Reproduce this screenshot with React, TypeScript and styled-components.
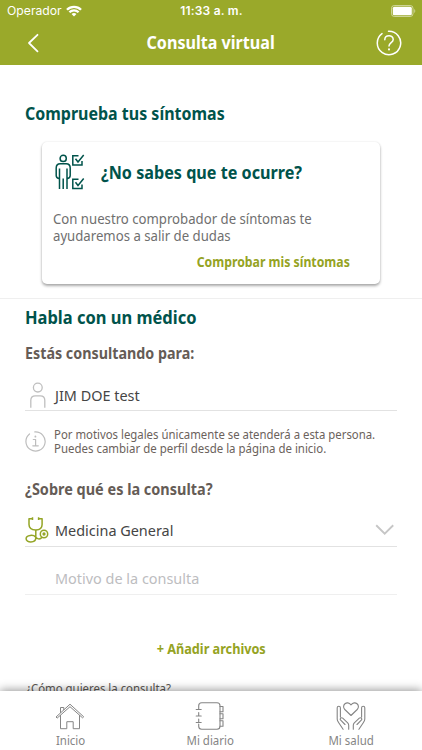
import React from "react";
import styled, { createGlobalStyle } from "styled-components";

const GlobalStyle = createGlobalStyle`
  * { box-sizing: border-box; }
  body { margin: 0; background: #fff; overflow: hidden; }
`;

const Screen = styled.div`
  display: flex;
  flex-direction: column;
  width: 422px;
  height: 750px;
  overflow: hidden;
  background: #fff;
  color: #6b625c;
  font-family: "Noto Sans", "Open Sans", sans-serif;
`;

const Narrow = styled.span<{ $x: number; $origin?: string }>`
  display: inline-block;
  white-space: nowrap;
  transform: scaleX(${(p) => p.$x});
  transform-origin: ${(p) => p.$origin || "left"} center;
`;

const Header = styled.header`
  flex: none;
  height: 65px;
  background: #9aa92a;
  color: #fff;
`;

const StatusBar = styled.div`
  display: grid;
  grid-template-columns: 1fr auto 1fr;
  align-items: center;
  height: 22px;
  padding: 0 6px 0 7px;
  font: 400 12.2px/22px Inter, sans-serif;
`;

const Carrier = styled.div`
  display: flex;
  align-items: center;
  gap: 4px;
`;

const Clock = styled.div`
  font-weight: 600;
  font-size: 12px;
  letter-spacing: 0.2px;
`;

const BatterySlot = styled.div`
  display: flex;
  justify-content: flex-end;
  margin-top: -1px;
`;

const NavBar = styled.div`
  display: grid;
  grid-template-columns: 66px 1fr 66px;
  align-items: center;
  justify-items: center;
  height: 41px;
`;

const NavTitle = styled.h1`
  margin: -1px 0 0;
  font-size: 18px;
  line-height: 24px;
  font-weight: 700;
`;

const Content = styled.main`
  flex: none;
  height: 626px;
  overflow: hidden;
`;

const SymptomSection = styled.section`
  height: 234px;
  padding: 36px 42px 0;
  border-bottom: 1px solid #efefef;
`;

const Heading = styled.h2<{ $outdent?: boolean }>`
  margin: 0 0 0 ${(p) => (p.$outdent ? "-17px" : "0")};
  color: #00534b;
  font-size: 18px;
  line-height: 24px;
  font-weight: 700;
`;

const Card = styled.article`
  display: flex;
  flex-direction: column;
  width: 338px;
  height: 142px;
  margin-top: 17px;
  padding: 10px 30px 0 11px;
  border-radius: 5px;
  background: #fff;
  box-shadow: 0 2px 3px rgba(0, 0, 0, 0.33), 0 0 2px rgba(0, 0, 0, 0.1);
`;

const CardHeader = styled.div`
  display: flex;
  align-items: center;
  height: 40px;
  gap: 16px;
  svg { margin-left: 2px; }
`;

const CardText = styled.p`
  margin: 19px 0 0;
  color: #6f6f6f;
  font-size: 13.8px;
  line-height: 16.5px;
`;

const TextLine = styled.span`
  display: block;
`;

const LinkButton = styled.button<{ $align: "right" | "center" }>`
  display: block;
  width: 100%;
  padding: 0;
  border: 0;
  background: none;
  color: #95a323;
  font: 700 14px/20px "Noto Sans", sans-serif;
  text-align: ${(p) => p.$align};
`;

const CardAction = styled.div`
  margin-top: 8px;
`;

const DoctorSection = styled.section`
  padding: 5.5px 25px 0;
`;

const Question = styled.h3<{ $top: number }>`
  margin: ${(p) => p.$top}px 0 0;
  color: #655c56;
  font-size: 15.8px;
  line-height: 22px;
  font-weight: 700;
`;

const Field = styled.div<{ $top: number; $faint?: boolean }>`
  display: grid;
  grid-template-columns: 29.5px 1fr 22px;
  align-items: center;
  height: 30px;
  margin-top: ${(p) => p.$top}px;
  padding-bottom: 3px;
  border-bottom: 1px solid ${(p) => (p.$faint ? "#efefef" : "#e2e2e2")};
  color: ${(p) => (p.$faint ? "#bdbdbf" : "#454545")};
  font-size: 15.2px;
  line-height: 22px;
`;

const Notice = styled.div`
  display: grid;
  grid-template-columns: 28.5px 1fr;
  align-items: center;
  height: 28px;
  margin-top: 16.5px;
  color: #6b625c;
  font-size: 12px;
  line-height: 14px;
`;

const Attach = styled.div`
  margin-top: 44px;
`;

const NextQuestion = styled.p`
  margin: 21px 0 0 1px;
  color: #5b5754;
  font-size: 12px;
  line-height: 18px;
`;

const TabBar = styled.nav`
  position: relative;
  flex: none;
  display: grid;
  grid-template-columns: repeat(3, 1fr);
  height: 59px;
  padding-right: 1px;
  background: #fff;
  box-shadow: 0 -1px 9px rgba(0, 0, 0, 0.42);
`;

const Tab = styled.a`
  display: flex;
  flex-direction: column;
  align-items: center;
  padding-top: 11px;
  color: #858585;
  font-size: 12.2px;
  line-height: 16px;
  svg { margin-bottom: 3px; }
`;

const stroke = { fill: "none", stroke: "currentColor", strokeLinecap: "round", strokeLinejoin: "round" } as const;

const Wifi = () => (
  <svg width="16" height="12" viewBox="0 0 15 11" fill="none" stroke="#fff" strokeWidth="2.2">
    <path d="M.9 4.3A9.4 9.4 0 0 1 14.1 4.3M3.2 6.7A6.1 6.1 0 0 1 11.8 6.7" />
    <path d="M7.5 10.7 5.2 8.4a3.3 3.3 0 0 1 4.6 0Z" fill="#fff" stroke="none" />
  </svg>
);

const Battery = () => (
  <svg width="25" height="12" viewBox="0 0 25 12">
    <rect x=".5" y=".5" width="21.500" height="11" rx="2.8" fill="none" stroke="#fff" strokeOpacity=".5" />
    <rect x="1.800" y="1.800" width="19" height="8.400" rx="1.5" fill="#fff" />
    <path d="M23.300 4v4c1.300-.6 1.300-3.400 0-4Z" fill="#fff" fillOpacity=".55" />
  </svg>
);

const Back = () => (
  <svg width="12" height="20" viewBox="0 0 12 20" {...stroke} strokeWidth="1.8">
    <path d="M10.500 1.800 2 10l8.500 8.300" />
  </svg>
);

const Help = () => (
  <svg width="26" height="26" viewBox="0 0 26 26" {...stroke} strokeWidth="1.5">
    <path d="M12.500 1.300A11.700 11.700 0 1 1 6 3.600" />
    <path d="M8.800 9.700c0-5.200 8.400-5.200 8.400-.3 0 3.100-4.200 3.200-4.200 6.500" />
    <path d="M13 19.300v.2" strokeWidth="2" />
  </svg>
);

const BodyCheck = () => (
  <svg width="30" height="36" viewBox="0 0 30 36" {...stroke} strokeLinecap="butt" strokeLinejoin="miter" strokeWidth="1.500" color="#00534b">
    <circle cx="8.200" cy="4.400" r="3.100" />
    <path d="M3.800 24.500C1.800 24 1.200 23 1.200 21.500V14c0-3 1.500-4.300 4-4.300h6c2.500 0 4 1.300 4 4.300v7.500c0 1.500-.6 2.500-2.600 3M4.500 14.500V35M12 14.500V35M8.200 24.500V35" />
    <path d="M23.500 1.700h-5.700V11H27V7M20.500 4.700l2.500 3.300L28.700 1M23.500 25.200h-5.700v9.300H27v-4M20.500 28.200l2.500 3.300 5.700-7" />
  </svg>
);

const Person = () => (
  <svg width="26" height="28" viewBox="0 0 26 28" {...stroke} strokeLinecap="butt" strokeWidth="1.300" color="#bfbfbf">
    <circle cx="12.800" cy="6.600" r="4.400" />
    <path d="M5.800 26.800v-7.500q0-4.500 4.500-4.500h5q4.500 0 4.500 4.500v7.500" />
  </svg>
);

const Info = () => (
  <svg width="21" height="21" viewBox="0 0 21 21" {...stroke} strokeWidth="1.200" color="#bdbdbd">
    <path d="M9.800.9A9.600 9.600 0 1 1 4.500 3" />
    <path d="M8.300 8.500h2.300v6.300M7.800 14.800h5.500" />
    <path d="M10.400 5.500v.2" strokeWidth="1.800" />
  </svg>
);

const Stethoscope = () => (
  <svg width="24" height="26" viewBox="0 0 24 26" {...stroke} strokeLinecap="butt" strokeWidth="1.500" color="#94a526">
    <path d="M7.300 1.700H4V7.500c0 3.300 2.800 5.300 6.800 5.600 4-.3 6.300-2.300 6.300-5.600V1.700h-3.300" />
    <path d="M7.500.3v2.800M13.600.3v2.800M10.800 13v8c0 5.300-10 5-9.700.5.300-3.800 7.600-3.800 9.200-1.800 1.500 2 4.500 3.600 6.700.6" />
    <circle cx="19" cy="17" r="3.700" />
    <circle cx="19" cy="17" r=".9" />
  </svg>
);

const ChevronDown = () => (
  <svg width="20" height="12" viewBox="0 0 20 12" fill="none" stroke="#c6c6c6" strokeWidth="1.900">
    <path d="M1.200 1.200 9.700 9.600l8.500-8.400" />
  </svg>
);

const House = () => (
  <svg width="30" height="28" viewBox="0 0 30 28" {...stroke} strokeWidth="1">
    <path d="M1.300 14.800 15 2.200l13.700 12.600-1.200 1L15 4.700 2.500 15.800Z" />
    <path d="M5.500 10.500V5.500h3.300v2.200M5.500 13.500v13.200h6.300v-7h6.400v7h6.300V13.500" />
  </svg>
);

const Diary = () => (
  <svg width="30" height="28" viewBox="0 0 30 28" {...stroke} strokeWidth="1.100">
    <path d="M3.700 6V3.800Q3.700.8 6.700.8H22q3 0 3 3v20.400q0 3-3 3H6.700q-3 0-3-3V22M3.700 5.500v2M3.700 10.500V14M3.700 17v3.500M1.200 7.500h5M1.200 14h5M1.200 20.500h5" />
    <path d="M25 4.500h3v5.200h-3M25 11.700h3v5h-3M25 18.700h3v5.500h-3" />
  </svg>
);

const HeartHands = () => (
  <svg width="30" height="28" viewBox="0 0 30 28" {...stroke} strokeWidth="1.100">
    <path d="M15 13.500 8.800 7.500C5 3.500 11-2.200 15 2.800c4-5 10 .7 6.200 4.700Z" />
    <path d="M12.700 27.300v-4c0-1.200-.3-1.800-1-2.500l-5-4.600c-1.400-1.300-3.300.6-2 2l4.300 4.300M4.400 15V5.800C4.400 3.700 1.200 3.700 1.200 5.800V17c0 1.500.4 2.200 1.200 3.200l4.700 7.100" />
    <path d="M17.300 27.300v-4c0-1.200.3-1.800 1-2.500l5-4.600c1.400-1.300 3.300.6 2 2L21 22.500M25.600 15V5.800c0-2.100 3.200-2.100 3.200 0V17c0 1.500-.4 2.200-1.200 3.200l-4.700 7.100" />
  </svg>
);

const tabs = [
  { label: "Inicio", icon: <House /> },
  { label: "Mi diario", icon: <Diary /> },
  { label: "Mi salud", icon: <HeartHands /> },
];

export default function App() {
  return (
    <Screen>
      <GlobalStyle />
      <Header>
        <StatusBar>
          <Carrier>Operador <Wifi /></Carrier>
          <Clock>11:33 a. m.</Clock>
          <BatterySlot><Battery /></BatterySlot>
        </StatusBar>
        <NavBar>
          <Back />
          <NavTitle><Narrow $x={0.895} $origin="center">Consulta virtual</Narrow></NavTitle>
          <Help />
        </NavBar>
      </Header>
      <Content>
        <SymptomSection>
          <Heading $outdent><Narrow $x={0.888}>Comprueba tus síntomas</Narrow></Heading>
          <Card>
            <CardHeader>
              <BodyCheck />
              <Heading><Narrow $x={0.898}>¿No sabes que te ocurre?</Narrow></Heading>
            </CardHeader>
            <CardText>
              <TextLine><Narrow $x={0.955}>Con nuestro comprobador de síntomas te</Narrow></TextLine>
              <TextLine><Narrow $x={0.955}>ayudaremos a salir de dudas</Narrow></TextLine>
            </CardText>
            <CardAction>
              <LinkButton $align="right"><Narrow $x={0.876} $origin="right">Comprobar mis síntomas</Narrow></LinkButton>
            </CardAction>
          </Card>
        </SymptomSection>
        <DoctorSection>
          <Heading><Narrow $x={0.915}>Habla con un médico</Narrow></Heading>
          <Question $top={13.5}><Narrow $x={0.905}>Estás consultando para:</Narrow></Question>
          <Field $top={17}>
            <Person />
            <Narrow $x={0.95}>JIM DOE test</Narrow>
          </Field>
          <Notice>
            <Info />
            <div>
              <TextLine><Narrow $x={0.947}>Por motivos legales únicamente se atenderá a esta persona.</Narrow></TextLine>
              <TextLine><Narrow $x={0.954}>Puedes cambiar de perfil desde la página de inicio.</Narrow></TextLine>
            </div>
          </Notice>
          <Question $top={22}><Narrow $x={0.915}>¿Sobre qué es la consulta?</Narrow></Question>
          <Field $top={17}>
            <Stethoscope />
            <Narrow $x={0.95}>Medicina General</Narrow>
            <ChevronDown />
          </Field>
          <Field $top={18} $faint>
            <span />
            <Narrow $x={0.95}>Motivo de la consulta</Narrow>
          </Field>
          <Attach>
            <LinkButton $align="center"><Narrow $x={0.905} $origin="center">+ Añadir archivos</Narrow></LinkButton>
          </Attach>
          <NextQuestion><Narrow $x={0.95}>¿Cómo quieres la consulta?</Narrow></NextQuestion>
        </DoctorSection>
      </Content>
      <TabBar>
        {tabs.map((t) => (
          <Tab key={t.label}>
            {t.icon}
            <Narrow $x={0.94} $origin="center">{t.label}</Narrow>
          </Tab>
        ))}
      </TabBar>
    </Screen>
  );
}
